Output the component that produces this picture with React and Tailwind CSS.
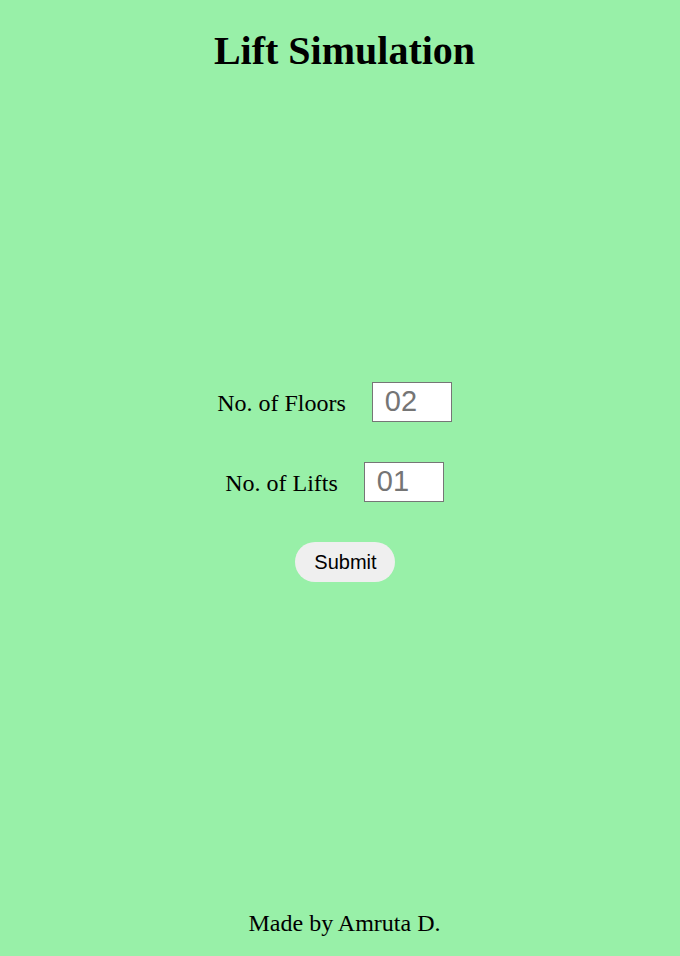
export default function App() {
  return (
    <div className="min-h-[956px] bg-[#98f0a8] flex flex-col items-center font-['Liberation_Serif',serif] text-black">
      <h1 className="mt-[28px] w-full pl-[9px] text-center text-[40px] leading-[46px] font-bold">
        Lift Simulation
      </h1>

      {/* Formulario */}
      <form className="mt-[308px] flex flex-col items-center" onSubmit={(e) => e.preventDefault()}>
        <div className="mr-[11px] flex items-baseline gap-[26px]">
          <label htmlFor="floors" className="text-[24px] leading-[28px]">No. of Floors</label>
          <input
            id="floors"
            type="text"
            placeholder="02"
            className="h-[40px] w-[80px] border border-[#767676] bg-white pl-3 font-['Liberation_Sans',sans-serif] text-[29px] placeholder:text-[#757575] outline-none"
          />
        </div>
        <div className="mr-[11px] mt-[40px] flex items-baseline gap-[26px]">
          <label htmlFor="lifts" className="text-[24px] leading-[28px]">No. of Lifts</label>
          <input
            id="lifts"
            type="text"
            placeholder="01"
            className="h-[40px] w-[80px] border border-[#767676] bg-white pl-3 font-['Liberation_Sans',sans-serif] text-[29px] placeholder:text-[#757575] outline-none"
          />
        </div>
        <button
          type="submit"
          className="ml-[11px] mt-[40px] h-[40px] w-[100px] rounded-full bg-[#efefef] font-['Liberation_Sans',sans-serif] text-[20px] text-black"
        >
          Submit
        </button>
      </form>

      <footer className="mt-[327px] w-full pl-[9px] text-center text-[24px] leading-[28px]">
        Made by Amruta D.
      </footer>
    </div>
  );
}
